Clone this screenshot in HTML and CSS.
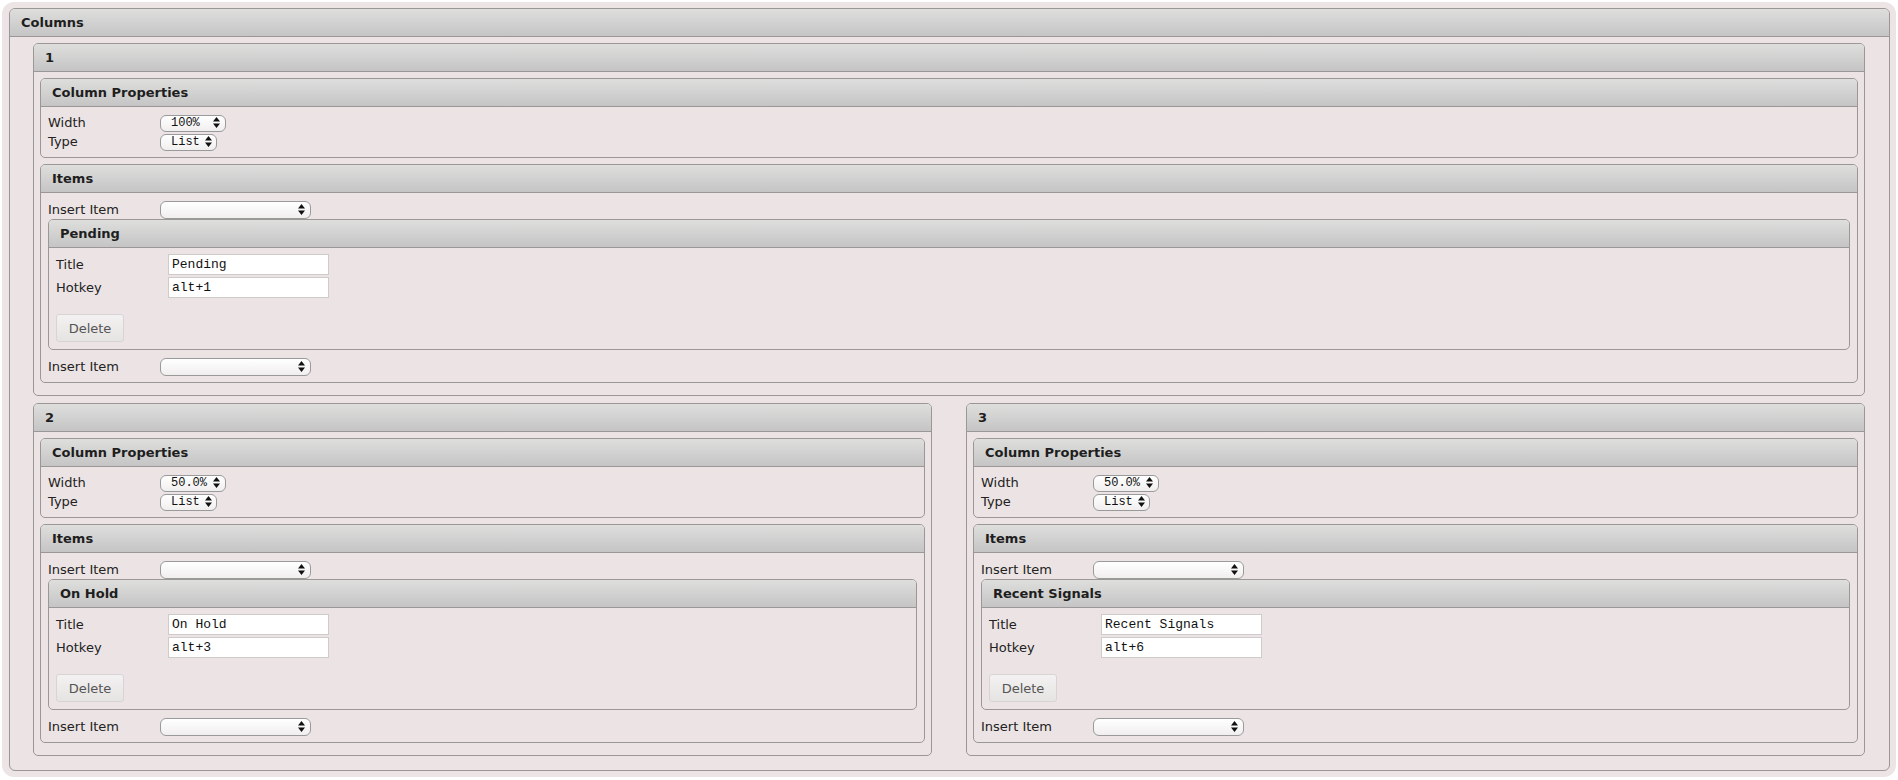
FILE: index.html
```html
<!DOCTYPE html>
<html lang="en">
<head>
<meta charset="utf-8">
<title>Columns</title>
<link rel="stylesheet" href="styles.css">
</head>
<body>
<div class="page">
  <section class="panel outer">
    <header class="panel-head">Columns</header>
    <div class="outer-body">

      <section class="panel column">
        <header class="panel-head">1</header>
        <div class="column-body">
          <section class="panel section">
            <header class="panel-head">Column Properties</header>
            <div class="section-body">
              <div class="row"><span class="label">Width</span><span class="sel w-width"><select><option>100%</option></select><svg class="arrows" viewBox="0 0 7 11" width="7" height="11"><path d="M3.5 0L7 4.5H0z M0 6.5H7L3.5 11z"/></svg></span></div>
              <div class="row"><span class="label">Type</span><span class="sel w-type"><select><option>List</option></select><svg class="arrows" viewBox="0 0 7 11" width="7" height="11"><path d="M3.5 0L7 4.5H0z M0 6.5H7L3.5 11z"/></svg></span></div>
            </div>
          </section>
          <section class="panel section">
            <header class="panel-head">Items</header>
            <div class="section-body">
              <div class="row insert"><span class="label">Insert Item</span><span class="sel w-insert"><select><option></option></select><svg class="arrows" viewBox="0 0 7 11" width="7" height="11"><path d="M3.5 0L7 4.5H0z M0 6.5H7L3.5 11z"/></svg></span></div>
              <section class="panel item">
                <header class="panel-head">Pending</header>
                <div class="item-body">
                  <div class="field"><span class="label">Title</span><input type="text" value="Pending"></div>
                  <div class="field"><span class="label">Hotkey</span><input type="text" value="alt+1"></div>
                  <button type="button" class="btn">Delete</button>
                </div>
              </section>
              <div class="row insert"><span class="label">Insert Item</span><span class="sel w-insert"><select><option></option></select><svg class="arrows" viewBox="0 0 7 11" width="7" height="11"><path d="M3.5 0L7 4.5H0z M0 6.5H7L3.5 11z"/></svg></span></div>
            </div>
          </section>
        </div>
      </section>

      <div class="pair">
        <section class="panel column">
          <header class="panel-head">2</header>
          <div class="column-body">
            <section class="panel section">
              <header class="panel-head">Column Properties</header>
              <div class="section-body">
                <div class="row"><span class="label">Width</span><span class="sel w-width"><select><option>50.0%</option></select><svg class="arrows" viewBox="0 0 7 11" width="7" height="11"><path d="M3.5 0L7 4.5H0z M0 6.5H7L3.5 11z"/></svg></span></div>
                <div class="row"><span class="label">Type</span><span class="sel w-type"><select><option>List</option></select><svg class="arrows" viewBox="0 0 7 11" width="7" height="11"><path d="M3.5 0L7 4.5H0z M0 6.5H7L3.5 11z"/></svg></span></div>
              </div>
            </section>
            <section class="panel section">
              <header class="panel-head">Items</header>
              <div class="section-body">
                <div class="row insert"><span class="label">Insert Item</span><span class="sel w-insert"><select><option></option></select><svg class="arrows" viewBox="0 0 7 11" width="7" height="11"><path d="M3.5 0L7 4.5H0z M0 6.5H7L3.5 11z"/></svg></span></div>
                <section class="panel item">
                  <header class="panel-head">On Hold</header>
                  <div class="item-body">
                    <div class="field"><span class="label">Title</span><input type="text" value="On Hold"></div>
                    <div class="field"><span class="label">Hotkey</span><input type="text" value="alt+3"></div>
                    <button type="button" class="btn">Delete</button>
                  </div>
                </section>
                <div class="row insert"><span class="label">Insert Item</span><span class="sel w-insert"><select><option></option></select><svg class="arrows" viewBox="0 0 7 11" width="7" height="11"><path d="M3.5 0L7 4.5H0z M0 6.5H7L3.5 11z"/></svg></span></div>
              </div>
            </section>
          </div>
        </section>

        <section class="panel column">
          <header class="panel-head">3</header>
          <div class="column-body">
            <section class="panel section">
              <header class="panel-head">Column Properties</header>
              <div class="section-body">
                <div class="row"><span class="label">Width</span><span class="sel w-width"><select><option>50.0%</option></select><svg class="arrows" viewBox="0 0 7 11" width="7" height="11"><path d="M3.5 0L7 4.5H0z M0 6.5H7L3.5 11z"/></svg></span></div>
                <div class="row"><span class="label">Type</span><span class="sel w-type"><select><option>List</option></select><svg class="arrows" viewBox="0 0 7 11" width="7" height="11"><path d="M3.5 0L7 4.5H0z M0 6.5H7L3.5 11z"/></svg></span></div>
              </div>
            </section>
            <section class="panel section">
              <header class="panel-head">Items</header>
              <div class="section-body">
                <div class="row insert"><span class="label">Insert Item</span><span class="sel w-insert"><select><option></option></select><svg class="arrows" viewBox="0 0 7 11" width="7" height="11"><path d="M3.5 0L7 4.5H0z M0 6.5H7L3.5 11z"/></svg></span></div>
                <section class="panel item">
                  <header class="panel-head">Recent Signals</header>
                  <div class="item-body">
                    <div class="field"><span class="label">Title</span><input type="text" value="Recent Signals"></div>
                    <div class="field"><span class="label">Hotkey</span><input type="text" value="alt+6"></div>
                    <button type="button" class="btn">Delete</button>
                  </div>
                </section>
                <div class="row insert"><span class="label">Insert Item</span><span class="sel w-insert"><select><option></option></select><svg class="arrows" viewBox="0 0 7 11" width="7" height="11"><path d="M3.5 0L7 4.5H0z M0 6.5H7L3.5 11z"/></svg></span></div>
              </div>
            </section>
          </div>
        </section>
      </div>

    </div>
  </section>
</div>
</body>
</html>
```

FILE: styles.css
```css
* { box-sizing: border-box; }

html, body {
  margin: 0;
  background: #ffffff;
}

body {
  padding: 2px;
  font-family: "DejaVu Sans", Verdana, sans-serif;
  font-size: 13px;
  color: #222;
}

.page {
  background: #ede5e5;
  border-radius: 12px;
  padding: 6px 6px 6px 7px;
}

/* generic bordered box with a grey gradient title bar */
.panel {
  background: #ece4e4;
  border: 1px solid #9c9797;
  border-radius: 5px;
  overflow: hidden;
}

.panel-head {
  height: 28px;
  line-height: 27px;
  padding-left: 11px;
  font-weight: bold;
  font-size: 13px;
  color: #1e1e1e;
  background: linear-gradient(#dededd, #c5c5c5);
  border-bottom: 1px solid #9c9797;
}

.outer { border-radius: 6px; }

.outer-body {
  padding: 6px 24px 7px 23px;
}

.column { margin-bottom: 7px; }

.column-body {
  padding: 6px;
}

.section { margin-bottom: 6px; }

.section-body {
  padding: 7px 7px 6px 7px;
}

.pair {
  display: grid;
  grid-template-columns: 1fr 1fr;
  gap: 34px;
}

.row {
  display: flex;
  align-items: center;
  height: 17px;
  margin-bottom: 2px;
}
.row:last-child { margin-bottom: 1px; }

.row.insert {
  height: 18px;
  margin-bottom: 1px;
}
.row.insert:last-child { margin-bottom: 1px; }

.label {
  flex: 0 0 112px;
  white-space: nowrap;
}

/* rounded select with a stacked up/down arrow */
.sel {
  position: relative;
  display: inline-block;
  height: 100%;
}

.sel select {
  -webkit-appearance: none;
  appearance: none;
  width: 100%;
  height: 100%;
  margin: 0;
  padding: 0 0 0 10px;
  border: 1px solid #9a9a9a;
  border-radius: 6px;
  background: linear-gradient(#ffffff, #f1eeee);
  font-family: "Liberation Mono", "Courier New", monospace;
  font-size: 12px;
  color: #111;
  line-height: 15px;
}

.sel .arrows {
  position: absolute;
  top: 50%;
  right: 6px;
  margin-top: -5.5px;
  fill: #111;
}

.w-width { width: 66px; }
.w-type { width: 57px; }
.w-insert { width: 151px; }

.w-type .arrows { right: 5px; }

.item { margin-bottom: 7px; }

.item-body {
  padding: 6px 7px 7px 7px;
}

.field {
  display: flex;
  align-items: center;
  margin-bottom: 2px;
}

.field input {
  width: 161px;
  height: 21px;
  margin: 0;
  padding: 0 3px;
  border: 1px solid #cfcbcb;
  background: #fff;
  font-family: "Liberation Mono", "Courier New", monospace;
  font-size: 13px;
  color: #111;
}

.btn {
  display: block;
  margin-top: 16px;
  width: 68px;
  height: 28px;
  padding: 0;
  border: 1px solid #d8d4d4;
  border-radius: 3px;
  background: linear-gradient(#f3f1f1, #e6e3e3);
  font-family: "DejaVu Sans", Verdana, sans-serif;
  font-size: 13px;
  color: #555;
}
```
